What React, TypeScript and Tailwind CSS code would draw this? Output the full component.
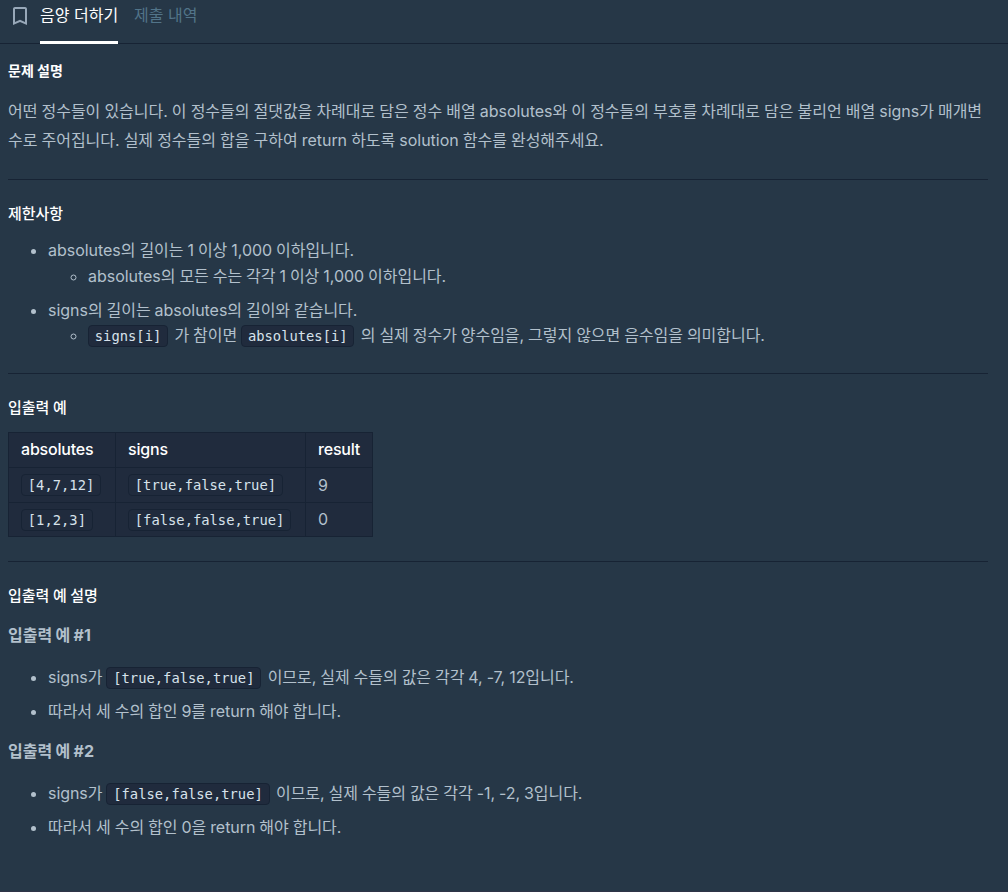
import React from 'react';

interface CodeProps {
  children: React.ReactNode;
}

interface Example {
  absolutes: string;
  signs: string;
  result: number;
}

const examples: Example[] = [
  { absolutes: '[4,7,12]', signs: '[true,false,true]', result: 9 },
  { absolutes: '[1,2,3]', signs: '[false,false,true]', result: 0 },
];

const Code: React.FC<CodeProps> = ({ children }) => (
  <code className="mr-[2.4px] inline-block h-[22px] rounded border border-[#172334] bg-[#202b3d] px-[5.8px] align-baseline font-['DejaVu_Sans_Mono',monospace] text-[13.8px] leading-5 tracking-normal text-[#d7e2eb]">
    {children}
  </code>
);

const Heading: React.FC<CodeProps> = ({ children }) => (
  <h5 className="h-[22px] text-[15px] leading-[21px] font-medium text-white">{children}</h5>
);

const Divider = () => <hr className="mt-6 mb-[23px] border-[#172334]" />;

const App: React.FC = () => {
  return (
    <div className="flex h-[892px] flex-col border-b border-[#2f3447] bg-[#263747] font-['Inter','Noto_Sans_CJK_KR',sans-serif] text-base text-[#b2c0cc]">
      {/* Tabs */}
      <header className="flex h-11 shrink-0 border-b border-[#172334] pl-2">
        <svg className="mt-1 mr-2 h-6 w-6" viewBox="0 0 24 24" fill="#98a8b9">
          <path d="M17 3H7c-1.1 0-2 .9-2 2v16l7-3 7 3V5c0-1.1-.9-2-2-2zm0 15l-5-2.18L7 18V5h10v13z" />
        </svg>
        <nav className="flex leading-[30px]">
          <a className="h-11 border-b-[3px] border-white text-white">음양 더하기</a>
          <a className="ml-4 text-[#527489]">제출 내역</a>
        </nav>
      </header>

      <main className="pt-4 pr-5 pl-2 tracking-[-0.03px] [word-spacing:-0.35px]">
        <h5 className="text-sm leading-[21px] font-bold tracking-normal text-white [word-spacing:0]">문제 설명</h5>
        <p className="mt-4 leading-[29px] break-all">
          어떤 정수들이 있습니다. 이 정수들의 절댓값을 차례대로 담은 정수 배열 absolutes와 이 정수들의 부호를 차례대로 담은 불리언 배열 signs가 매개변수로 주어집니다. 실제 정수들의 합을 구하여 return 하도록 solution 함수를 완성해주세요.
        </p>

        <Divider />

        <Heading>제한사항</Heading>
        <ul className="mt-3 list-disc space-y-2 pl-10 leading-[26px] [word-spacing:-0.5px]">
          <li>
            absolutes의 길이는 1 이상 1,000 이하입니다.
            <ul className="list-[circle] pl-10">
              <li>absolutes의 모든 수는 각각 1 이상 1,000 이하입니다.</li>
            </ul>
          </li>
          <li>
            signs의 길이는 absolutes의 길이와 같습니다.
            <ul className="-mt-px list-[circle] pb-px pl-10">
              <li className="h-[26px]">
                <Code>signs[i]</Code> 가 참이면 <Code>absolutes[i]</Code> 의 실제 정수가 양수임을, 그렇지 않으면 음수임을 의미합니다.
              </li>
            </ul>
          </li>
        </ul>

        <Divider />

        <Heading>입출력 예</Heading>
        <table className="mt-[13px] w-[365px] table-fixed border-collapse bg-[#202b3d] text-left">
          <colgroup>
            <col className="w-[107px]" />
            <col className="w-[190px]" />
            <col className="w-[67px]" />
          </colgroup>
          <thead className="tracking-[-0.2px] text-white">
            <tr className="h-[35px]">
              <th className="border border-[#172334] px-3 pt-0 pb-0.5 font-medium">absolutes</th>
              <th className="border border-[#172334] px-3 pt-0 pb-0.5 font-medium">signs</th>
              <th className="border border-[#172334] px-3 pt-0 pb-0.5 font-medium">result</th>
            </tr>
          </thead>
          <tbody>
            {examples.map((example) => (
              <tr key={example.signs} className="h-[35px] last:h-[34px]">
                <td className="border border-[#172334] px-3 pt-0 pb-0.5">
                  <Code>{example.absolutes}</Code>
                </td>
                <td className="border border-[#172334] px-3 pt-0 pb-0.5">
                  <Code>{example.signs}</Code>
                </td>
                <td className="border border-[#172334] px-3 pt-0 pb-px">{example.result}</td>
              </tr>
            ))}
          </tbody>
        </table>

        <Divider />

        <Heading>입출력 예 설명</Heading>
        <h6 className="mt-4 leading-6 font-bold">입출력 예 #1</h6>
        <ul className="mt-[17px] list-disc space-y-2 pl-10 leading-[26px] tracking-[-0.06px] [word-spacing:-0.4px]">
          <li className="h-[26px]">
            signs가 <Code>[true,false,true]</Code> 이므로, 실제 수들의 값은 각각 4, -7, 12입니다.
          </li>
          <li>따라서 세 수의 합인 9를 return 해야 합니다.</li>
        </ul>
        <h6 className="mt-[15px] leading-6 font-bold">입출력 예 #2</h6>
        <ul className="mt-[17px] list-disc space-y-2 pl-10 leading-[26px] tracking-[-0.06px] [word-spacing:-0.4px]">
          <li className="h-[26px]">
            signs가 <Code>[false,false,true]</Code> 이므로, 실제 수들의 값은 각각 -1, -2, 3입니다.
          </li>
          <li>따라서 세 수의 합인 0을 return 해야 합니다.</li>
        </ul>
      </main>
    </div>
  );
};

export default App;
